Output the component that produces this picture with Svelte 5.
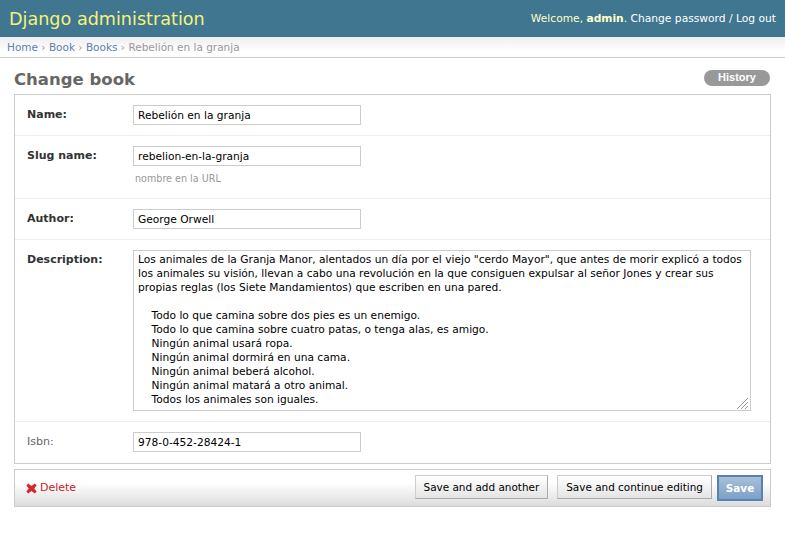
<script>
  const description = `Los animales de la Granja Manor, alentados un día por el viejo "cerdo Mayor", que antes de morir explicó a todos
los animales su visión, llevan a cabo una revolución en la que consiguen expulsar al señor Jones y crear sus
propias reglas (los Siete Mandamientos) que escriben en una pared.

    Todo lo que camina sobre dos pies es un enemigo.
    Todo lo que camina sobre cuatro patas, o tenga alas, es amigo.
    Ningún animal usará ropa.
    Ningún animal dormirá en una cama.
    Ningún animal beberá alcohol.
    Ningún animal matará a otro animal.
    Todos los animales son iguales.`;
</script>

<div class="page">
  <header class="top">
    <div class="brand">Django administration</div>
    <div class="tools">Welcome, <strong>admin</strong>. <a href="#a">Change password</a> / <a href="#a">Log out</a></div>
  </header>
  <nav class="crumbs"><a href="#a">Home</a> › <a href="#a">Book</a> › <a href="#a">Books</a> › Rebelión en la granja</nav>
  <main class="content">
    <div class="title-row">
      <h1>Change book</h1>
      <a class="history" href="#a">History</a>
    </div>
    <form>
      <div class="fields">
        <div class="row name"><label class="req" for="f1">Name:</label><input id="f1" value="Rebelión en la granja" /></div>
        <div class="row slug">
          <label class="req" for="f2">Slug name:</label>
          <div>
            <input id="f2" value="rebelion-en-la-granja" />
            <p class="help">nombre en la URL</p>
          </div>
        </div>
        <div class="row author"><label class="req" for="f3">Author:</label><input id="f3" value="George Orwell" /></div>
        <div class="row desc">
          <label class="req" for="f4">Description:</label>
          <div class="area">
            <textarea id="f4" wrap="off" value={description}></textarea>
            <svg class="grip" width="11" height="11" viewBox="0 0 11 11" stroke="#999" stroke-width="1" fill="none"><path d="M0 11 11 0M4 11 11 4M8 11 11 8"/></svg>
          </div>
        </div>
        <div class="row isbn"><label for="f5">Isbn:</label><input id="f5" value="978-0-452-28424-1" /></div>
      </div>
      <div class="submit">
        <a class="delete" href="#a">
          <svg width="11" height="11" viewBox="0 0 11 11"><path d="M2.2 .6 5.5 3 8.8 .6 10.6 2.4 8.2 5.5 10.6 8.6 8.8 10.4 5.5 8 2.2 10.4 .4 8.6 2.8 5.5 .4 2.4Z" fill="#d4262c"/></svg>
          Delete
        </a>
        <button type="button" class="btn">Save and add another</button>
        <button type="button" class="btn">Save and continue editing</button>
        <button type="button" class="btn save">Save</button>
      </div>
    </form>
  </main>
</div>

<style>
  :global(body) { margin: 0; background: #fff; }
  .page { width: 785px; height: 539px; overflow: hidden; font-family: "DejaVu Sans", "Liberation Sans", sans-serif; font-size: 11px; color: #333; }
  a { text-decoration: none; color: inherit; }
  .top { height: 37px; box-sizing: border-box; background: #417690; color: #ffc; display: flex; justify-content: space-between; align-items: center; padding: 0 9px; }
  .brand { font-size: 17.6px; color: #f4f379; }
  .tools { font-size: 10.7px; }
  .tools a { color: #fff; }
  .crumbs { height: 21px; box-sizing: border-box; border-bottom: 1px solid #ccc; padding: 3px 7px 0; background: linear-gradient(#eee, #fff 70%); color: #999; font-size: 10.5px; line-height: 14px; }
  .crumbs a { color: #5b80b2; }
  .content { padding: 0 14px; }
  .title-row { height: 36px; display: flex; justify-content: space-between; align-items: flex-start; }
  h1 { margin: 11px 0 0; font-size: 16.5px; line-height: 22px; font-weight: bold; color: #666; }
  .history { margin: 12px 1px 0 0; width: 66px; height: 16px; border-radius: 8px; background: #999; color: #fff; font: bold 11px/15px "Liberation Sans", sans-serif; text-align: center; }
  .fields { border: 1px solid #ccc; }
  .row { display: flex; align-items: flex-start; padding: 10px 20px 10px 12px; border-bottom: 1px solid #eee; box-sizing: border-box; }
  .row:last-child { border-bottom: 0; }
  .row label { width: 106px; flex: none; line-height: 20px; color: #666; font-size: 11px; }
  .row label.req { font-weight: bold; color: #333; }
  .name { height: 41px; }
  .slug { height: 63px; }
  .author { height: 41px; }
  .desc { height: 182px; }
  .isbn { height: 41px; }
  input, textarea { box-sizing: border-box; border: 1px solid #ccc; background: #fff; font: 10.65px/14px "DejaVu Sans", "Liberation Sans", sans-serif; color: #000; outline: 0; border-radius: 0; margin: 0; }
  input { width: 228px; height: 20px; padding: 2px 4px; display: block; }
  .area { position: relative; width: 618px; height: 161px; }
  textarea { width: 618px; height: 161px; padding: 2px 4px 0; resize: none; overflow: hidden; white-space: pre; display: block; }
  .grip { position: absolute; right: 3px; bottom: 2px; }
  .help { margin: 0; padding: 6px 0 0 2px; font-size: 9.6px; line-height: 13px; color: #999; }
  .submit { margin-top: 5px; height: 38px; box-sizing: border-box; border: 1px solid #ccc; background: linear-gradient(#fff 35%, #dcdcdc); display: flex; align-items: flex-start; padding: 5px 7px 0 11px; }
  .delete { margin: 6px auto 0 0; display: flex; align-items: center; gap: 3px; color: #cc2229; font-size: 11px; line-height: 14px; }
  .btn { box-sizing: border-box; height: 24px; margin-left: 9px; padding: 0 8px; border: 1px solid #ccc; border-right-color: #aaa; border-bottom-color: #aaa; background: linear-gradient(#fff, #e4e4e4); font: 10.45px "DejaVu Sans", sans-serif; color: #000; }
  .save { margin-left: 5px; width: 46px; height: 26px; padding: 0; border: 2px solid #5b80b2; background: linear-gradient(#a9c0d9, #7ba0c6); color: #fff; font-weight: bold; }
</style>
